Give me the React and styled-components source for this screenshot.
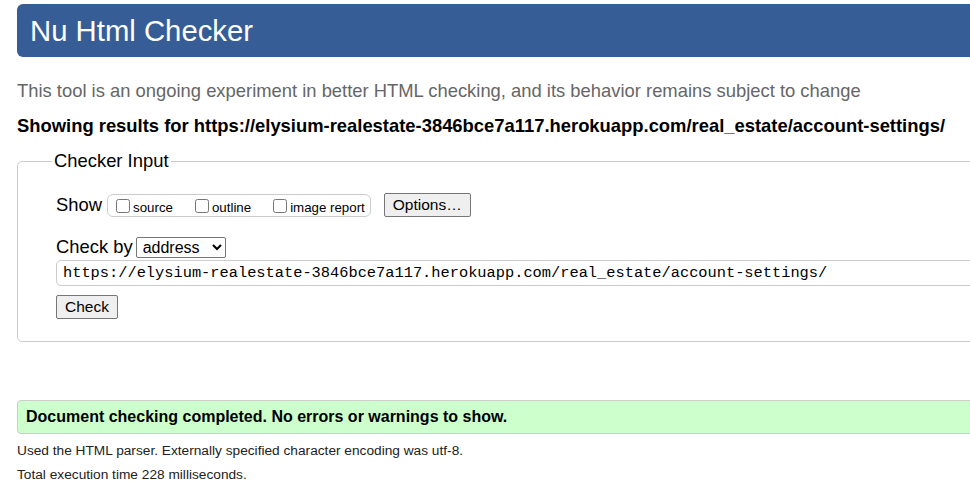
import React from "react";
import styled, { createGlobalStyle } from "styled-components";

const Global = createGlobalStyle`
  html, body {
    margin: 0;
    padding: 0;
    background: #fff;
    overflow: hidden;
  }
  body {
    font-family: "Liberation Sans", Arial, sans-serif;
    color: #000;
  }
`;

const Page = styled.div`
  width: 1100px;
  padding: 4px 0 0 17px;
  box-sizing: border-box;
`;

const Header = styled.h1`
  margin: 0;
  height: 53px;
  box-sizing: border-box;
  padding: 0 13px;
  display: flex;
  align-items: center;
  background: #365d95;
  color: #fff;
  border-radius: 6px;
  font-size: 29.3px;
  font-weight: normal;
`;

const Intro = styled.p`
  margin: 22px 0 0;
  font-size: 18.4px;
  color: #666;
  line-height: 24px;
`;

const Results = styled.p`
  margin: 11px 0 0;
  font-size: 18.4px;
  font-weight: bold;
  line-height: 24px;
`;

const Fieldset = styled.fieldset`
  margin: 12px 0 0;
  padding: 15px 0 22px 38px;
  border: 1px solid #ccc;
  border-radius: 5px;
`;

const Legend = styled.legend`
  margin-left: -4px;
  padding: 0 2px;
  font-size: 18.4px;
`;

const Row = styled.div`
  display: flex;
  align-items: center;
  gap: ${(p) => p.gap || 4}px;
  margin-top: ${(p) => p.top || 0}px;
  font-size: 18.4px;
`;

const Group = styled.span`
  display: inline-flex;
  align-items: center;
  gap: 22px;
  height: 21px;
  padding: 0 5px 0 8px;
  border: 1px solid #ccc;
  border-radius: 6px;
  margin-left: 1px;
  margin-right: 9px;
`;

const CheckLabel = styled.label`
  display: inline-flex;
  align-items: flex-end;
  gap: 3px;
  font-size: 13.3px;
  padding-top: 4px;
`;

const Box = styled.input.attrs({ type: "checkbox" })`
  margin: 0;
  width: 14px;
  height: 14px;
  position: relative;
  top: -2px;
`;

const Button = styled.button`
  font-family: "Liberation Sans", Arial, sans-serif;
  font-size: ${(p) => p.size || 15}px;
  height: 24px;
  padding: 0 8px;
  background: #efefef;
  border: 1px solid #767676;
  border-radius: 2px;
  color: #000;
`;

const Select = styled.select`
  font-family: "Liberation Sans", Arial, sans-serif;
  font-size: 16px;
  height: 21px;
  width: 90px;
  padding: 0 0 0 2px;
  border: 1px solid #767676;
  border-radius: 2px;
  background: #fff;
  color: #000;
`;

const UrlInput = styled.input`
  display: block;
  margin-top: 2px;
  width: 1000px;
  height: 26px;
  box-sizing: border-box;
  padding: 0 6px;
  font-family: "Liberation Mono", "Courier New", monospace;
  font-size: 15.35px;
  color: #000;
  border: 1px solid #ccc;
  border-radius: 5px;
  outline: none;
`;

const CheckRow = styled.div`
  margin-top: 9px;
`;

const Success = styled.p`
  margin: 58px 0 0;
  height: 34px;
  box-sizing: border-box;
  display: flex;
  align-items: center;
  padding: 0 8px;
  background: #ccffcc;
  border: 1px solid #ccc;
  border-radius: 4px;
  font-size: 16px;
  font-weight: bold;
`;

const Note = styled.p`
  margin: ${(p) => p.top || 0}px 0 0;
  font-size: 13.7px;
  line-height: 16px;
  color: #222;
`;

export default function App() {
  return (
    <>
      <Global />
      <Page>
        <Header>Nu Html Checker</Header>
        <Intro>
          This tool is an ongoing experiment in better HTML checking, and its
          behavior remains subject to change
        </Intro>
        <Results>
          Showing results for
          https://elysium-realestate-3846bce7a117.herokuapp.com/real_estate/account-settings/
        </Results>
        <Fieldset>
          <Legend>Checker Input</Legend>
          <Row top={6}>
            Show
            <Group>
              <CheckLabel>
                <Box /> source
              </CheckLabel>
              <CheckLabel>
                <Box /> outline
              </CheckLabel>
              <CheckLabel>
                <Box /> image report
              </CheckLabel>
            </Group>
            <Button size={15.5}>Options…</Button>
          </Row>
          <Row top={19} gap={3}>
            Check by
            <Select defaultValue="address">
              <option value="address">address</option>
              <option value="file">file upload</option>
              <option value="text">text input</option>
            </Select>
          </Row>
          <UrlInput
            readOnly
            value="https://elysium-realestate-3846bce7a117.herokuapp.com/real_estate/account-settings/"
          />
          <CheckRow>
            <Button size={15.5}>Check</Button>
          </CheckRow>
        </Fieldset>
        <Success>Document checking completed. No errors or warnings to show.</Success>
        <Note top={9}>
          Used the HTML parser. Externally specified character encoding was
          utf-8.
        </Note>
        <Note top={8}>Total execution time 228 milliseconds.</Note>
      </Page>
    </>
  );
}
